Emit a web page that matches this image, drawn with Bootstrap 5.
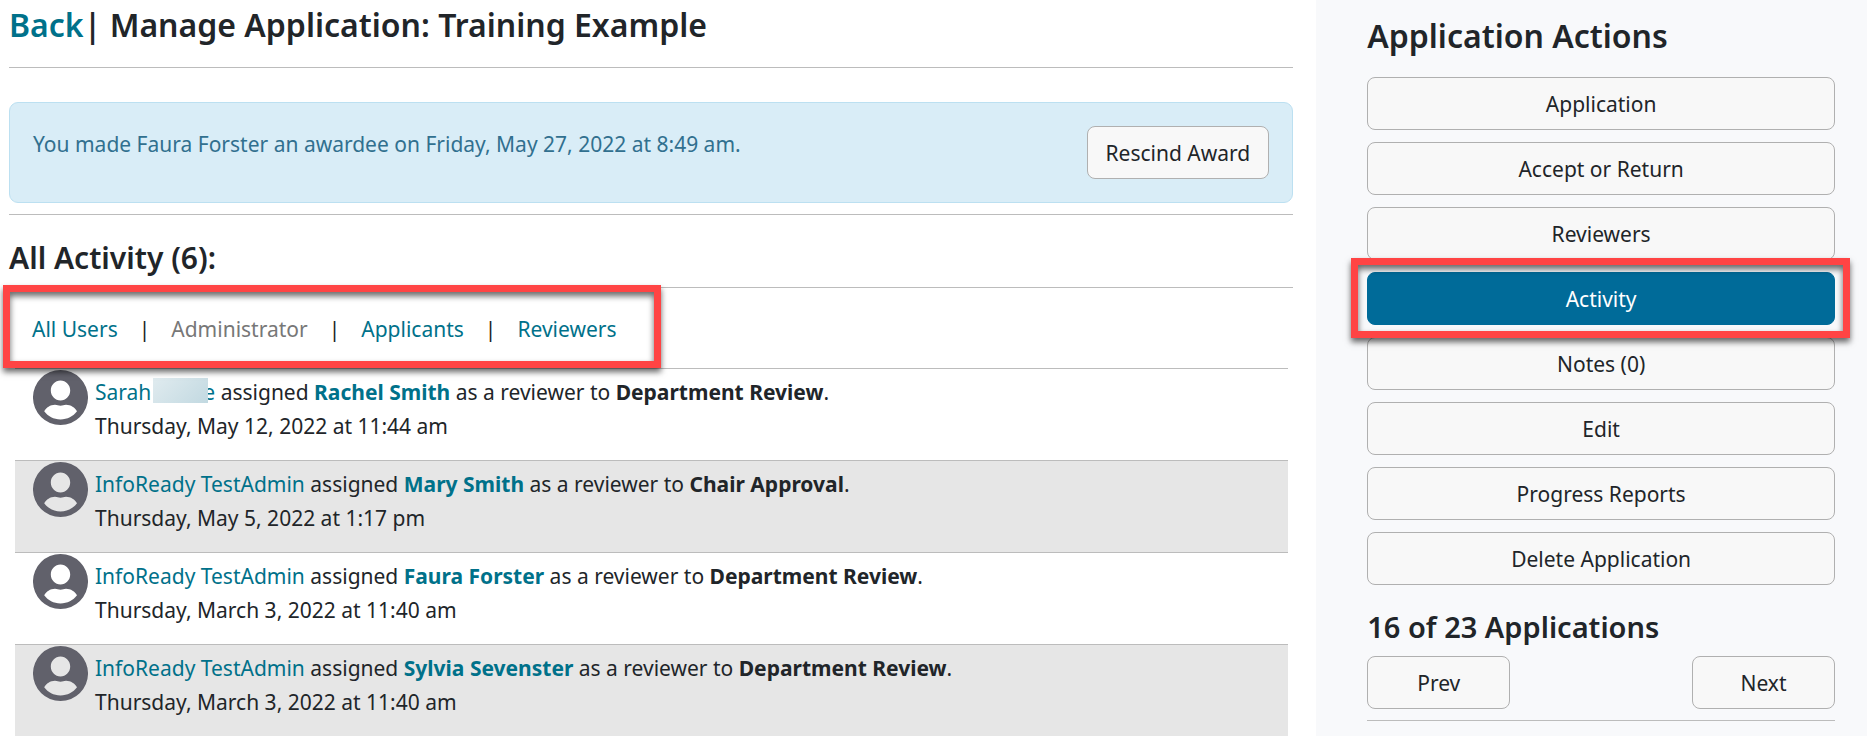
<!DOCTYPE html>
<html lang="en">
<head>
<meta charset="utf-8">
<meta name="viewport" content="width=device-width, initial-scale=1">
<title>Manage Application: Training Example</title>
<link href="https://cdn.jsdelivr.net/npm/bootstrap@5.3.0/dist/css/bootstrap.min.css" rel="stylesheet">
<style>
  body { font-family: "Noto Sans", "Open Sans", sans-serif; font-size: 21px; line-height: 34px; color: #212529; background: #fff; }
  a { color: #00718a; text-decoration: none; }
  a:hover { text-decoration: underline; }
  h1, h2, h3 { font-weight: 600; margin: 0; }
  h1, .side-title { font-size: 32px; line-height: 40px; }
  h2 { font-size: 30px; line-height: 36px; }
  h3 { font-size: 29px; line-height: 36px; }
  .main-pane { flex: 1 1 0; min-width: 0; padding: 5px 23px 0 9px; }
  .side-pane { flex: 0 0 29.5%; background: #f8f9fb; padding: 16px 32px 15px 51px; }
  .page-rule { border: 0; border-top: 1px solid #bcbcbc; opacity: 1; margin: 0; }
  .title-row { padding-bottom: 22px; }
  .award-note { background: #d9edf7; border: 1px solid #bce0f1; border-radius: 9px; color: #31708f; padding: 23px; margin: 34px 0 11px; }
  .award-text { padding-top: 1px; }
  .action-btn { background: #f8f8f8; border: 1px solid #b0b0b0; border-radius: 8px; color: #212529; font-size: 21px; line-height: 35px; padding: 9px 18px 7px; }
  .action-btn:hover { background: #ececec; border-color: #999; }
  .action-btn.active { background: #006b99 !important; border-color: #006b99 !important; color: #fff !important; }
  .action-list { gap: 12px; margin: 21px 0 24px; }
  .pager-btn { width: 143px; }
  .pager { padding: 11px 0; }
  .activity-title { padding: 25px 0 11px; }
  .filter-bar { padding: 24px 23px 22px; gap: 21px; }
  .filter-bar .current { color: #777; }
  .callout { position: absolute; border: 7px solid #ff4444; box-shadow: 0 4px 6px rgba(0,0,0,.6), inset 0 4px 6px rgba(0,0,0,.6); pointer-events: none; z-index: 2; }
  .filter-callout { left: -6px; top: -3px; bottom: 0; width: 658px; }
  .btn-callout { inset: -14px -15px -13px -16px; }
  .activity-list { margin: 0 5px 0 6px; }
  .activity-item { border-top: 1px solid #bcbcbc; padding: 1px 18px 0; min-height: 92px; gap: 7px; }
  .activity-item:nth-child(even) { background: #e6e6e6; }
  .activity-text { padding-top: 5px; }
  .avatar { width: 55px; height: 55px; flex: none; }
  .redacted { display: inline-block; width: 55px; height: 25px; margin: 0 -5px 0 2px; vertical-align: -3px; position: relative; background: linear-gradient(135deg, #e0ebef, #c2d9e1); }
</style>
</head>
<body>
<svg class="d-none" aria-hidden="true">
  <symbol id="person" viewBox="0 0 55 55">
    <path fill="#61616b" fill-rule="evenodd" d="M27.500 0a27.500 27.500 0 1 0 0 55a27.500 27.500 0 1 0 0-55zM27.500 10.500c5.300 0 9.700 4.500 9.700 10s-4.400 10-9.700 10s-9.700-4.500-9.700-10s4.400-10 9.700-10zM11.200 41.200c2-3.600 6-6.500 10.800-6.500c2 0 3.500 1 5.500 1s3.500-1 5.500-1c4.800 0 9 2.900 11 6.500c-3.800 5-9.600 8.200-16.500 8.200s-12.500-3.200-16.300-8.200z"/>
  </symbol>
</svg>
<div class="d-flex min-vh-100">
  <main class="main-pane">
    <h1 class="title-row"><a href="#">Back</a>| Manage Application: Training Example</h1>
    <hr class="page-rule">
    <div class="award-note d-flex justify-content-between align-items-start" role="status">
      <span class="award-text">You made Faura Forster an awardee on Friday, May 27, 2022 at 8:49 am.</span>
      <button type="button" class="btn action-btn">Rescind Award</button>
    </div>
    <hr class="page-rule">
    <h2 class="activity-title">All Activity (6):</h2>
    <hr class="page-rule">
    <div class="position-relative">
      <nav class="filter-bar d-flex" aria-label="Filter activity">
        <a href="#">All Users</a><span>|</span>
        <a href="#" class="current" aria-current="true">Administrator</a><span>|</span>
        <a href="#">Applicants</a><span>|</span>
        <a href="#">Reviewers</a>
      </nav>
      <div class="callout filter-callout"></div>
    </div>
    <ul class="activity-list list-unstyled">
      <li class="activity-item d-flex">
        <svg class="avatar" aria-hidden="true"><use href="#person"/></svg>
        <div class="activity-text">
          <div><a href="#">Sarah<span class="redacted"></span>e</a> assigned <a href="#" class="fw-bold">Rachel Smith</a> as a reviewer to <b>Department Review</b>.</div>
          <div>Thursday, May 12, 2022 at 11:44 am</div>
        </div>
      </li>
      <li class="activity-item d-flex">
        <svg class="avatar" aria-hidden="true"><use href="#person"/></svg>
        <div class="activity-text">
          <div><a href="#">InfoReady TestAdmin</a> assigned <a href="#" class="fw-bold">Mary Smith</a> as a reviewer to <b>Chair Approval</b>.</div>
          <div>Thursday, May 5, 2022 at 1:17 pm</div>
        </div>
      </li>
      <li class="activity-item d-flex">
        <svg class="avatar" aria-hidden="true"><use href="#person"/></svg>
        <div class="activity-text">
          <div><a href="#">InfoReady TestAdmin</a> assigned <a href="#" class="fw-bold">Faura Forster</a> as a reviewer to <b>Department Review</b>.</div>
          <div>Thursday, March 3, 2022 at 11:40 am</div>
        </div>
      </li>
      <li class="activity-item d-flex">
        <svg class="avatar" aria-hidden="true"><use href="#person"/></svg>
        <div class="activity-text">
          <div><a href="#">InfoReady TestAdmin</a> assigned <a href="#" class="fw-bold">Sylvia Sevenster</a> as a reviewer to <b>Department Review</b>.</div>
          <div>Thursday, March 3, 2022 at 11:40 am</div>
        </div>
      </li>
    </ul>
  </main>
  <aside class="side-pane">
    <h2 class="side-title">Application Actions</h2>
    <div class="action-list d-grid">
      <button type="button" class="btn action-btn">Application</button>
      <button type="button" class="btn action-btn">Accept or Return</button>
      <button type="button" class="btn action-btn">Reviewers</button>
      <div class="position-relative d-grid">
        <button type="button" class="btn action-btn active">Activity</button>
        <div class="callout btn-callout"></div>
      </div>
      <button type="button" class="btn action-btn">Notes (0)</button>
      <button type="button" class="btn action-btn">Edit</button>
      <button type="button" class="btn action-btn">Progress Reports</button>
      <button type="button" class="btn action-btn">Delete Application</button>
    </div>
    <h3>16 of 23 Applications</h3>
    <div class="pager d-flex justify-content-between">
      <button type="button" class="btn action-btn pager-btn">Prev</button>
      <button type="button" class="btn action-btn pager-btn">Next</button>
    </div>
    <hr class="page-rule">
  </aside>
</div>
<script src="https://cdn.jsdelivr.net/npm/bootstrap@5.3.0/dist/js/bootstrap.bundle.min.js"></script>
</body>
</html>
